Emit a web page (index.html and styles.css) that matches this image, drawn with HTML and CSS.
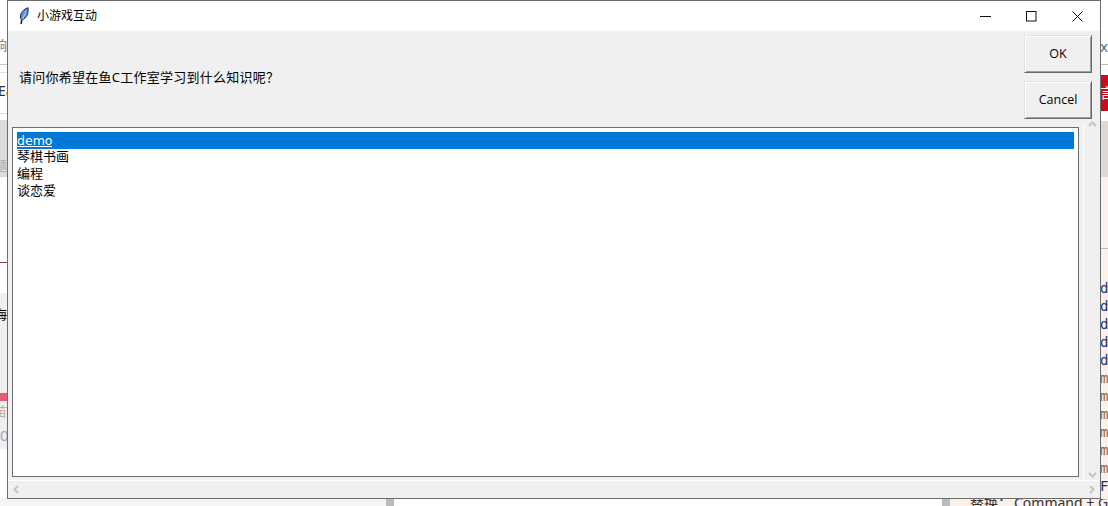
FILE: index.html
```html
<!DOCTYPE html>
<html lang="zh">
<head>
<meta charset="utf-8">
<title>小游戏互动</title>
<link rel="stylesheet" href="styles.css">
</head>
<body>
<div class="screen">
  <div class="strip strip-left">
    <div class="seg h38"></div>
    <div class="seg h17 clip-r orange">响</div>
    <div class="seg h9"></div>
    <div class="rule light"></div>
    <div class="seg h7"></div>
    <div class="rule lighter"></div>
    <div class="seg h40 clip-l dark">E<span class="orange">a</span></div>
    <div class="rule lighter"></div>
    <div class="seg h6"></div>
    <div class="seg h57 grey clip-r bottom-text muted">题</div>
    <div class="seg h85"></div>
    <div class="rule maroon"></div>
    <div class="seg h30"></div>
    <div class="seg h100 pale clip-r top-text black">海</div>
    <div class="seg h8 rose"></div>
    <div class="seg h20 pale clip-r tan">苗</div>
    <div class="seg h28 pale clip-l lilac">0</div>
    <div class="fill"></div>
    <div class="seg h8 smoke"></div>
  </div>

  <div class="window">
    <header class="titlebar">
      <svg class="feather" width="10" height="18" viewBox="0 0 10 18" aria-hidden="true">
        <path d="M2 17 3 12" fill="none" stroke="#111" stroke-width="1.4"/>
        <path d="M2.600 13C0 9.500 2 3 9 .7 9.700 5.500 8 11.500 2.600 13Z" fill="#5a92dc" stroke="#1a2438" stroke-width="1"/>
        <path d="M3.200 12.500 7.500 4" fill="none" stroke="#bcd6f5" stroke-width=".9"/>
      </svg>
      <span class="title">小游戏互动</span>
      <div class="caption">
        <svg class="cap-btn" width="11" height="11" viewBox="0 0 11 11" aria-hidden="true"><path d="M0 5.500H11" stroke="#111"/></svg>
        <svg class="cap-btn" width="11" height="11" viewBox="0 0 11 11" aria-hidden="true"><rect x=".5" y=".5" width="9.500" height="9.500" fill="none" stroke="#111"/></svg>
        <svg class="cap-btn" width="11" height="11" viewBox="0 0 11 11" aria-hidden="true"><path d="M.5.5 10.500 10.500M10.500.5.5 10.500" stroke="#111"/></svg>
      </div>
    </header>

    <section class="prompt-row">
      <p class="prompt">请问你希望在鱼C工作室学习到什么知识呢？</p>
      <div class="actions">
        <button class="btn" type="button">OK</button>
        <button class="btn" type="button">Cancel</button>
      </div>
    </section>

    <section class="list-area">
      <div class="list-well">
        <ul class="listbox">
          <li class="item selected"><span class="active">demo</span></li>
          <li class="item">琴棋书画</li>
          <li class="item">编程</li>
          <li class="item">谈恋爱</li>
        </ul>
      </div>
      <div class="vscroll">
        <svg width="9" height="6" viewBox="0 0 9 6" aria-hidden="true"><path d="M1 5 4.500 1.500 8 5" class="arrow"/></svg>
        <svg width="9" height="6" viewBox="0 0 9 6" aria-hidden="true"><path d="M1 1 4.500 4.500 8 1" class="arrow"/></svg>
      </div>
      <div class="hscroll">
        <svg width="6" height="9" viewBox="0 0 6 9" aria-hidden="true"><path d="M5 1 1.500 4.500 5 8" class="arrow"/></svg>
        <svg width="6" height="9" viewBox="0 0 6 9" aria-hidden="true"><path d="M1 1 4.500 4.500 1 8" class="arrow"/></svg>
      </div>
    </section>
  </div>

  <div class="strip strip-right">
    <div class="seg h38"></div>
    <div class="seg h17 clip-l xmark">x</div>
    <div class="seg h9"></div>
    <div class="rule mid"></div>
    <div class="seg h10"></div>
    <div class="seg h36 red clip-l white-text">言</div>
    <div class="seg h10"></div>
    <div class="seg h56 taupe"></div>
    <div class="seg h71 cream"></div>
    <div class="rule mid"></div>
    <div class="seg h30 cream"></div>
    <div class="code-lines">
      <span class="navy">d</span><span class="navy">d</span><span class="navy">d</span><span class="navy">d</span><span class="navy">d</span>
      <span class="brown">m</span><span class="brown">m</span><span class="brown">m</span><span class="brown">m</span><span class="brown">m</span><span class="brown">m</span>
      <span class="dark">F</span>
    </div>
  </div>

  <div class="bottom-strip">
    <div class="b-smoke"></div>
    <div class="b-bar"></div>
    <div class="b-white"></div>
    <div class="b-bar"></div>
    <div class="b-cream"><span class="b-label">替换：</span><span>Command + G</span></div>
  </div>
</div>
</body>
</html>
```

FILE: styles.css
```css
* { box-sizing: border-box; }
html, body { margin: 0; padding: 0; background: #fff; }
.screen {
  width: 1108px;
  height: 506px;
  overflow: hidden;
  display: grid;
  grid-template-columns: 7px 1094px 7px;
  grid-template-rows: 499px 7px;
  font-family: "Noto Sans", "Noto Sans CJK SC", sans-serif;
}

/* background page peeking around the dialog */
.strip { display: flex; flex-direction: column; overflow: hidden; font-size: 13px; }
.strip-left { grid-row: 1 / 3; grid-column: 1; }
.strip-right { grid-row: 1; grid-column: 3; background: #fbf1ea; }
.seg { flex: none; display: flex; overflow: hidden; white-space: nowrap; line-height: 17px; }
.fill { flex: 1; }
.rule { flex: none; height: 1px; }
.h6 { height: 6px; } .h7 { height: 7px; } .h8 { height: 8px; } .h9 { height: 9px; }
.h10 { height: 10px; } .h17 { height: 17px; } .h20 { height: 20px; } .h28 { height: 28px; }
.h30 { height: 30px; } .h36 { height: 36px; } .h38 { height: 38px; } .h40 { height: 40px; }
.h56 { height: 56px; } .h57 { height: 57px; } .h71 { height: 71px; } .h85 { height: 85px; } .h100 { height: 100px; }
.strip-right .seg { background: #fff; }
.strip-right .seg.cream { background: #fbf1ea; }
.strip-right .seg.taupe { background: #e0d8d1; }
.strip-right .seg.red { background: #c90c1e; }
.clip-r { justify-content: flex-end; }
.clip-l { justify-content: flex-start; }
.h40.clip-l { align-items: center; margin-left: -2px; padding-bottom: 5px; font-size: 14px; }
.bottom-text { align-items: flex-end; padding-bottom: 3px; }
.top-text { padding-top: 13px; line-height: 17px; }
.light { background: #c8c8c8; }
.lighter { background: #dedede; }
.mid { background: #bdbdbd; }
.maroon { background: #7c4450; }
.grey { background: #dcdcdc; }
.pale { background: #efefef; }
.rose { background: #e2606f; }
.smoke { background: #f5f5f5; }
.orange { color: #b8681a; }
.h17.orange { line-height: 15px; }
.dark { color: #333; }
.muted { color: #a9a9a9; }
.black { color: #000; }
.tan { color: #c0b090; line-height: 20px; }
.lilac { color: #a8a4c0; font-size: 15px; align-items: center; }
.xmark { color: #50608a; font-size: 15px; line-height: 17px; margin-left: -1px; }
.white-text { color: #fff; font-size: 14px; line-height: 36px; margin-left: -1px; }
.code-lines { display: flex; flex-direction: column; font-family: "DejaVu Sans Mono", monospace; font-size: 14px; line-height: 18px; margin-left: -1px; }
.code-lines span { height: 18px; }
.navy { color: #27306c; }
.brown { color: #96632f; }

.bottom-strip { grid-row: 2; grid-column: 2 / 4; display: flex; overflow: hidden; }
.b-smoke { flex: none; width: 379px; background: #f5f5f5; }
.b-bar { flex: none; width: 8px; background: #bbb; }
.b-white { flex: none; width: 548px; background: #fff; }
.b-cream {
  flex: 1; min-width: 0; background: #fbf1ea; padding-left: 20px; white-space: nowrap;
  font-size: 14px; line-height: 14px; color: #333; margin-top: -3px;
  display: flex;
}
.b-label { flex: none; width: 44px; }

/* dialog window */
.window {
  grid-row: 1; grid-column: 2;
  border: 1px solid #6d6d6d;
  background: #f0f0f0;
  display: flex;
  flex-direction: column;
  position: relative;
}
.titlebar {
  height: 30px; flex: none; background: #fff;
  display: flex; align-items: center;
  padding-left: 11px;
  font-size: 12px; color: #000;
}
.feather { margin-right: 8px; }
.title { line-height: 30px; }
.caption { margin-left: auto; display: flex; align-items: center; gap: 35px; padding-right: 17px; }
.cap-btn { display: block; }

.prompt-row {
  flex: none; height: 92px;
  display: flex; justify-content: space-between;
  padding: 4px 8px 0 11px;
}
.prompt { margin: 26px 0 0; font-size: 13px; line-height: 32px; color: #000; height: 32px; letter-spacing: .25px; }
.actions { display: flex; flex-direction: column; gap: 8px; }
.btn {
  width: 68px; height: 38px; padding: 0 0 2px;
  background: #f0f0f0;
  font: 12.5px "Open Sans", "Noto Sans", sans-serif;
  color: #000;
  border: 1px solid;
  border-color: #e3e3e3 #696969 #696969 #e3e3e3;
  box-shadow: inset 1px 1px 0 #fff, inset -1px -1px 0 #a0a0a0;
}

.list-area {
  flex: 1; min-height: 0;
  display: grid;
  grid-template-columns: 1fr 16px;
  grid-template-rows: 1fr 18px;
}
.list-well { padding: 4px 4px 3px 4px; border-right: 1px solid #fff; grid-column: 1; grid-row: 1; }
.listbox {
  list-style: none; margin: 0;
  height: 100%;
  background: #fff;
  border: 1px solid #6d6d6d;
  padding: 4px 4px 0 4px;
  font-size: 13px;
  color: #000;
}
.item { height: 17px; line-height: 15px; white-space: nowrap; }
.selected { background: #0078d7; color: #fff; display: flex; align-items: flex-start; }
.active {
  display: block; margin-top: 1px; height: 14px;
  font-family: "DejaVu Sans", sans-serif; font-size: 12.5px; line-height: 15px;
  border-bottom: 1px solid #fff;
}
.vscroll {
  grid-column: 2; grid-row: 1;
  display: flex; flex-direction: column; justify-content: space-between; align-items: center;
  padding: 2px 0 2px 0; margin-top: -4px;
}
.hscroll {
  grid-column: 1 / 3; grid-row: 2;
  border-top: 1px solid #fff;
  display: flex; justify-content: space-between; align-items: center;
  padding: 0 5px 0 5px;
}
.arrow { fill: none; stroke: #c4c4c4; stroke-width: 2; }
```
